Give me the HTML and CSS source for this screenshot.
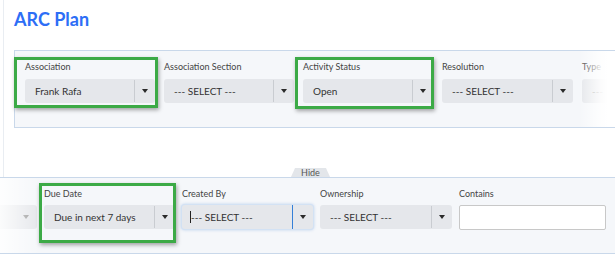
FILE: index.html
```html
<!DOCTYPE html>
<html>
<head>
<meta charset="utf-8">
<link rel="stylesheet" href="styles.css">
</head>
<body>
<div class="page">
  <div class="top">
    <h1 class="title">ARC Plan</h1>
    <section class="panel panel-top">
      <div class="row row-top">
        <div class="field w130">
          <div class="label">Association</div>
          <div class="select"><span class="value">Frank Rafa</span><span class="caret"></span></div>
        </div>
        <div class="field w130">
          <div class="label">Association Section</div>
          <div class="select"><span class="value">--- SELECT ---</span><span class="caret"></span></div>
        </div>
        <div class="field w130">
          <div class="label">Activity Status</div>
          <div class="select"><span class="value">Open</span><span class="caret"></span></div>
        </div>
        <div class="field w131">
          <div class="label">Resolution</div>
          <div class="select"><span class="value">--- SELECT ---</span><span class="caret"></span></div>
        </div>
        <div class="field w30">
          <div class="label">Type</div>
          <div class="select clipped"><span class="value">---</span></div>
        </div>
      </div>
      <div class="fade-right"></div>
    </section>
  </div>

  <div class="tab-row"><span class="tab">Hide</span></div>

  <section class="panel panel-bottom">
    <div class="row row-bottom">
      <div class="field w37">
        <div class="label">&nbsp;</div>
        <div class="select partial"><span class="caret"></span></div>
      </div>
      <div class="field w131">
        <div class="label">Due Date</div>
        <div class="select"><span class="value">Due in next 7 days</span><span class="caret"></span></div>
      </div>
      <div class="field w131">
        <div class="label">Created By</div>
        <div class="select focused"><span class="value cursor">--- SELECT ---</span><span class="caret"></span></div>
      </div>
      <div class="field w132">
        <div class="label">Ownership</div>
        <div class="select"><span class="value">--- SELECT ---</span><span class="caret"></span></div>
      </div>
      <div class="field w147">
        <div class="label">Contains</div>
        <div class="input"></div>
      </div>
    </div>
    <div class="fade-left"></div>
  </section>

  <div class="mark mark-1"></div>
  <div class="mark mark-2"></div>
  <div class="mark mark-3"></div>
</div>
</body>
</html>
```

FILE: styles.css
```css
* { box-sizing: border-box; }
html, body { margin: 0; padding: 0; background: #fff; }
body { font-family: "Lato", "Open Sans", sans-serif; color: #333; width: 615px; height: 255px; overflow: hidden; }

.page { position: relative; height: 255px; }

.top {
  margin-left: 3px;
  border-left: 1px solid #e9edf2;
  padding-top: 8px;
  height: 177px;
}

.title {
  margin: 0 0 20px 10px;
  font-size: 18px;
  line-height: 22px;
  font-weight: 700;
  color: #2d6ef6;
}

.panel {
  position: relative;
  background: #f5f7fa;
  border-top: 1px solid #c9d8ea;
  border-bottom: 1px solid #c9d8ea;
  overflow: hidden;
}

.panel-top {
  margin-left: 10px;
  border-left: 1px solid #c9d8ea;
  height: 78px;
  padding: 10px 0 0 10px;
}

.row { display: flex; gap: 9px; white-space: nowrap; }
.row-bottom { gap: 7px; }

.field { flex: none; }
.w30 { width: 26px; }
.w37 { width: 37px; }
.w130 { width: 130px; }
.w131 { width: 131px; }
.w132 { width: 132px; }
.w147 { width: 147px; }

.label {
  font-size: 9px;
  line-height: 12px;
  color: #444;
  margin-bottom: 6px;
}

.select {
  position: relative;
  height: 24px;
  background: #e5e7eb;
  border-radius: 3px;
  display: flex;
  align-items: center;
  padding-left: 10px;
  font-size: 10px;
  color: #333;
}
.select::after {
  content: "";
  position: absolute;
  right: 20px;
  top: 1px;
  bottom: 1px;
  width: 1px;
  background: #c9ccd1;
}
.select.clipped { border-radius: 3px 0 0 3px; color: #999; }
.select.clipped::after { display: none; }

.caret {
  position: absolute;
  right: 7px;
  top: 10px;
  width: 0;
  height: 0;
  border-left: 3px solid transparent;
  border-right: 3px solid transparent;
  border-top: 4px solid #2a2a2a;
}

.select.partial { border-radius: 0 3px 3px 0; }
.select.partial::after { display: none; }
.select.partial .caret { right: 8px; border-top-color: #999; }

.select.focused {
  box-shadow: 0 0 0 1px #d3e2f4, 0 0 3px 1px rgba(120, 165, 225, 0.45);
  padding-left: 8px;
}
.select.focused::after { background: #3580d8; width: 1px; top: 0; bottom: 0; }
.cursor { border-left: 1px solid #222; line-height: 12px; }

.input {
  height: 25px;
  background: #fff;
  border: 1px solid #c8c8c8;
  border-radius: 2px;
}

.fade-right {
  position: absolute;
  right: 0;
  top: 0;
  bottom: 0;
  width: 36px;
  background: linear-gradient(to right, rgba(255,255,255,0), rgba(255,255,255,0.85) 60%, #fff 80%);
}

.tab-row {
  height: 9px;
  margin-top: -9px;
  padding-left: 291px;
  display: flex;
}
.tab {
  display: block;
  width: 39px;
  height: 9px;
  background: #e3e6ea;
  clip-path: polygon(4px 0, 35px 0, 39px 100%, 0 100%);
  font-size: 9px;
  line-height: 10px;
  color: #555;
  text-align: center;
}

.panel-bottom {
  height: 77px;
  padding: 10px 0 0 0;
}
.row-bottom .label { margin-bottom: 5px; }
.row-bottom .select { height: 24px; }

.fade-left {
  position: absolute;
  left: 0;
  top: 0;
  bottom: 0;
  width: 40px;
  background: linear-gradient(to right, rgba(255,255,255,0.85), rgba(255,255,255,0));
}

.mark {
  position: absolute;
  border: 3px solid #3caa46;
  box-shadow: 1px 2px 4px rgba(0, 0, 0, 0.35);
}
.mark-1 { left: 14px; top: 57px; width: 144px; height: 51px; }
.mark-2 { left: 295px; top: 57px; width: 139px; height: 52px; }
.mark-3 { left: 39px; top: 183px; width: 137px; height: 60px; }
```
